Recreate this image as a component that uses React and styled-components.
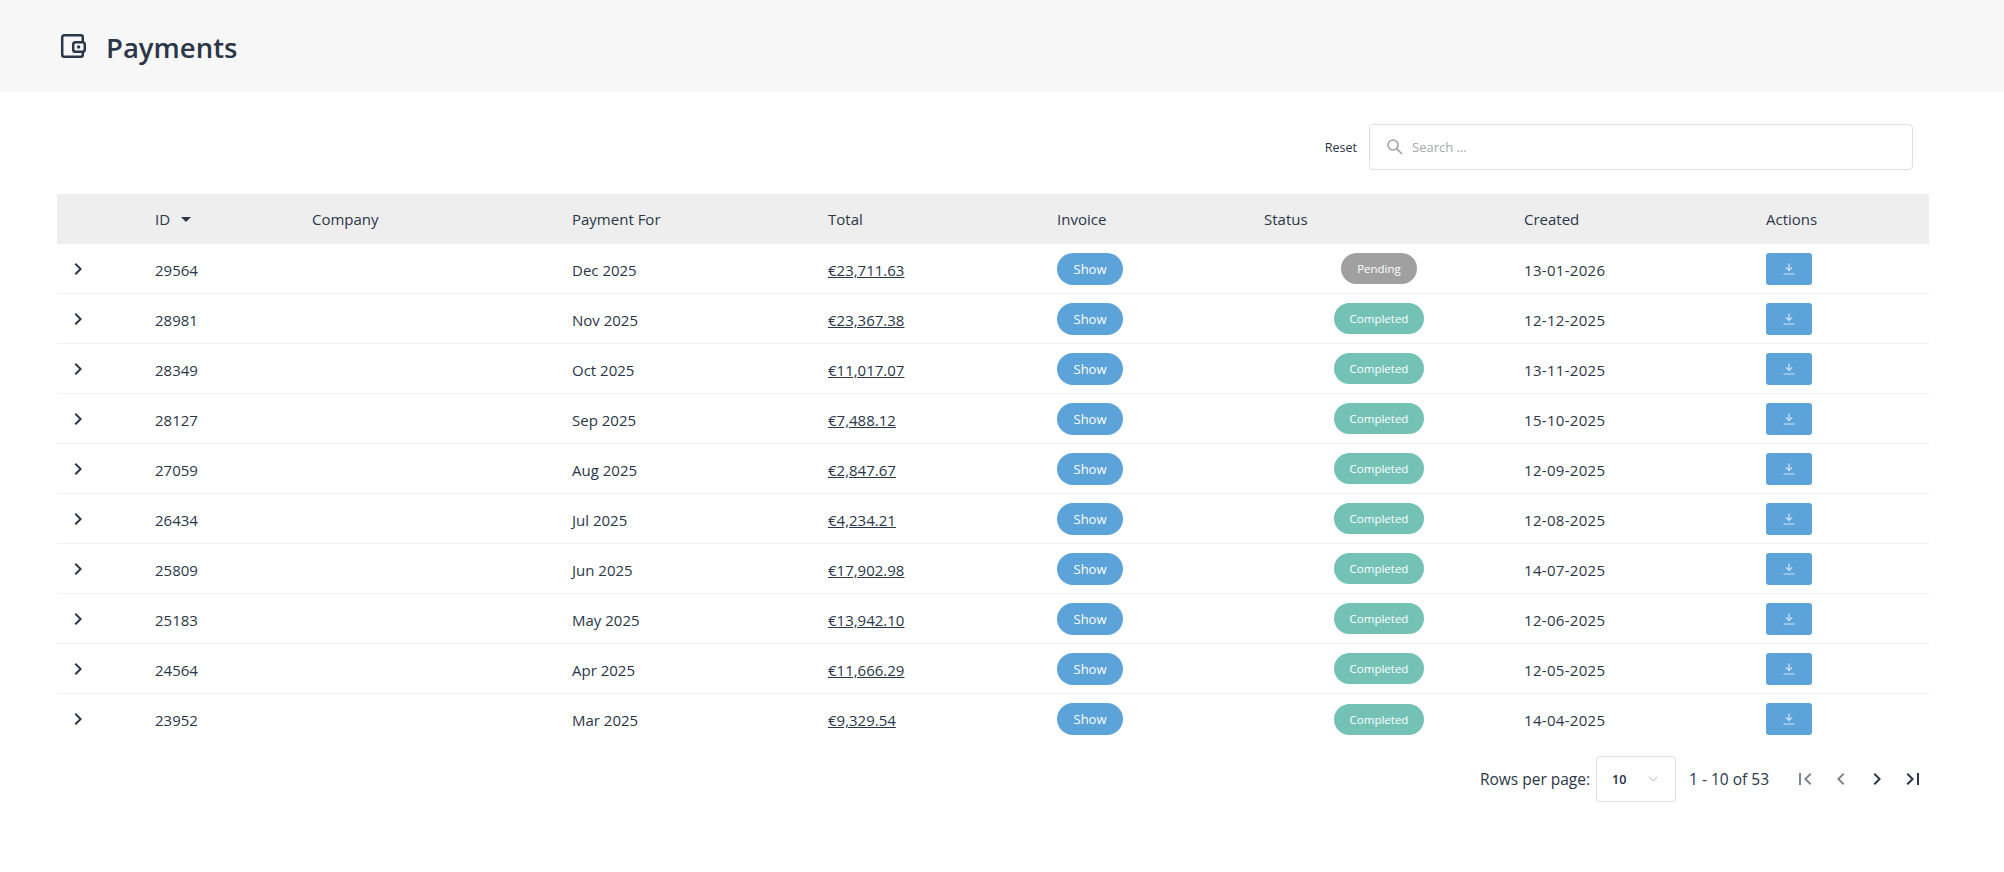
import styled, { createGlobalStyle } from 'styled-components'
import { MdChevronLeft, MdChevronRight, MdFirstPage, MdLastPage, MdArrowDropDown } from 'react-icons/md'
import { ChevronDown } from 'lucide-react'

const GlobalStyle = createGlobalStyle`
  html, body {
    margin: 0;
    padding: 0;
    background: #fff;
    font-family: "Open Sans", "Noto Sans", "Liberation Sans", sans-serif;
    color: #2b3648;
  }
`

const COLUMNS = '98px 157px 260px 256px 229px 207px 260px 242px 163px'

const Header = styled.header`
  height: 92px;
  background: #f7f7f7;
  display: flex;
  align-items: center;
  padding-left: 60px;
  gap: 18px;
`

const Title = styled.h1`
  margin: 0;
  padding-top: 2px;
  font-size: 27.5px;
  font-weight: 600;
  color: #2b3648;
`

const Content = styled.main`
  padding: 32px 75px 0 57px;
`

const Toolbar = styled.div`
  display: flex;
  justify-content: flex-end;
  align-items: center;
  gap: 12px;
  padding-right: 16px;
  margin-bottom: 24px;
`

const ResetLink = styled.span`
  font-size: 12.5px;
  color: #2b3648;
`

const SearchBox = styled.div`
  width: 544px;
  height: 46px;
  box-sizing: border-box;
  border: 1px solid #e0e0e0;
  border-radius: 4px;
  display: flex;
  align-items: center;
  gap: 9px;
  padding-left: 17px;
  color: #a6a8ad;
  font-size: 13px;
`

const Row = styled.div`
  display: grid;
  grid-template-columns: ${COLUMNS};
  align-items: center;
  height: 50px;
  font-size: 15px;
  box-sizing: border-box;
  border-bottom: 1px solid #f3f3f3;

  &:nth-last-child(2) {
    border-bottom: none;
  }
`

const HeadRow = styled(Row)`
  background: #eeeeee;
  border-bottom: none;
`

const HeadCell = styled.div`
  display: flex;
  align-items: center;
  gap: 4px;
`

const TextCell = styled.div`
  padding-top: 2px;
  letter-spacing: ${props => (props.$wide ? '0.3px' : '0')};
`

const Expander = styled.div`
  display: flex;
  padding-left: 9px;
  color: #2b3648;
`

const Total = styled.a`
  text-decoration: underline;
`

const ShowButton = styled.span`
  width: 66px;
  height: 32px;
  border-radius: 16px;
  background: #5ca3da;
  color: #fff;
  font-size: 13px;
  display: flex;
  align-items: center;
  justify-content: center;
`

const StatusCell = styled.div`
  display: flex;
  justify-content: center;
  padding-right: 30px;
`

const StatusPill = styled.span`
  width: ${props => (props.$pending ? '76px' : '90px')};
  height: 31px;
  border-radius: 16px;
  background: ${props => (props.$pending ? '#a0a0a0' : '#74c2b6')};
  color: #fff;
  font-size: 11.5px;
  display: flex;
  align-items: center;
  justify-content: center;
`

const DownloadButton = styled.span`
  width: 46px;
  height: 32px;
  border-radius: 3px;
  background: #5ca3da;
  display: flex;
  align-items: center;
  justify-content: center;
`

const Pagination = styled.div`
  display: flex;
  justify-content: flex-end;
  align-items: center;
  margin-top: 12px;
  height: 46px;
  font-size: 15.5px;
`

const SelectBox = styled.div`
  width: 80px;
  height: 46px;
  box-sizing: border-box;
  margin: 0 13px 0 6px;
  border: 1px solid #e0e0e0;
  border-radius: 4px;
  display: flex;
  align-items: center;
  justify-content: space-between;
  padding: 0 14px 0 15px;
  font-size: 12.5px;
  font-weight: 600;
  color: #1f2a3c;
`

const PageButtons = styled.div`
  display: flex;
  align-items: center;
  margin-left: 24px;
  gap: 12px;
  padding-right: 4px;
`

const PageButton = styled.span`
  display: flex;
  color: ${props => (props.$disabled ? '#7d8590' : '#2b3648')};
`

const WalletIcon = () => (
  <svg width="28" height="28" viewBox="0 0 28 28" fill="none" stroke="#2b3648" strokeWidth="2.5">
    <path d="M22.8 10V5.2a2 2 0 0 0-2-2H4.2a2 2 0 0 0-2 2v17.6a2 2 0 0 0 2 2h16.6a2 2 0 0 0 2-2V20" />
    <rect x="13.2" y="10.2" width="11.6" height="9.6" rx="2.4" />
    <circle cx="18.6" cy="15" r="1.7" fill="#2b3648" stroke="none" />
  </svg>
)

const SearchIcon = () => (
  <svg width="16" height="16" viewBox="0 0 16 16" fill="none" stroke="#a0a2a7" strokeWidth="1.6">
    <circle cx="6" cy="6" r="5" />
    <path d="M9.6 9.6L15 15" />
  </svg>
)

const DownloadIcon = () => (
  <svg width="14" height="14" viewBox="0 0 14 14" fill="none" stroke="#d3e6f6" strokeWidth="1.2">
    <path d="M7 1.5v6.8M3.8 5.4L7 8.4l3.2-3M1.5 12h11" />
  </svg>
)

const payments = [
  ['29564', 'Dec 2025', '€23,711.63', 'Pending', '13-01-2026'],
  ['28981', 'Nov 2025', '€23,367.38', 'Completed', '12-12-2025'],
  ['28349', 'Oct 2025', '€11,017.07', 'Completed', '13-11-2025'],
  ['28127', 'Sep 2025', '€7,488.12', 'Completed', '15-10-2025'],
  ['27059', 'Aug 2025', '€2,847.67', 'Completed', '12-09-2025'],
  ['26434', 'Jul 2025', '€4,234.21', 'Completed', '12-08-2025'],
  ['25809', 'Jun 2025', '€17,902.98', 'Completed', '14-07-2025'],
  ['25183', 'May 2025', '€13,942.10', 'Completed', '12-06-2025'],
  ['24564', 'Apr 2025', '€11,666.29', 'Completed', '12-05-2025'],
  ['23952', 'Mar 2025', '€9,329.54', 'Completed', '14-04-2025'],
]

const App = () => (
  <>
    <GlobalStyle />
    <Header>
      <WalletIcon />
      <Title>Payments</Title>
    </Header>
    <Content>
      <Toolbar>
        <ResetLink>Reset</ResetLink>
        <SearchBox>
          <SearchIcon />
          Search ...
        </SearchBox>
      </Toolbar>
      <HeadRow>
        <div />
        <HeadCell>ID <MdArrowDropDown size={24} /></HeadCell>
        <HeadCell>Company</HeadCell>
        <HeadCell>Payment For</HeadCell>
        <HeadCell>Total</HeadCell>
        <HeadCell>Invoice</HeadCell>
        <HeadCell>Status</HeadCell>
        <HeadCell>Created</HeadCell>
        <HeadCell>Actions</HeadCell>
      </HeadRow>
      {payments.map(([id, period, total, status, created]) => (
        <Row key={id}>
          <Expander><MdChevronRight size={24} /></Expander>
          <TextCell>{id}</TextCell>
          <div />
          <TextCell>{period}</TextCell>
          <TextCell><Total>{total}</Total></TextCell>
          <div><ShowButton>Show</ShowButton></div>
          <StatusCell>
            <StatusPill $pending={status === 'Pending'}>{status}</StatusPill>
          </StatusCell>
          <TextCell $wide>{created}</TextCell>
          <div><DownloadButton><DownloadIcon /></DownloadButton></div>
        </Row>
      ))}
      <Pagination>
        Rows per page:
        <SelectBox>
          10
          <ChevronDown size={16} strokeWidth={1.2} color="#a6a8ad" />
        </SelectBox>
        1 - 10 of 53
        <PageButtons>
          <PageButton $disabled><MdFirstPage size={24} /></PageButton>
          <PageButton $disabled><MdChevronLeft size={24} /></PageButton>
          <PageButton><MdChevronRight size={24} /></PageButton>
          <PageButton><MdLastPage size={24} /></PageButton>
        </PageButtons>
      </Pagination>
    </Content>
  </>
)

export default App
